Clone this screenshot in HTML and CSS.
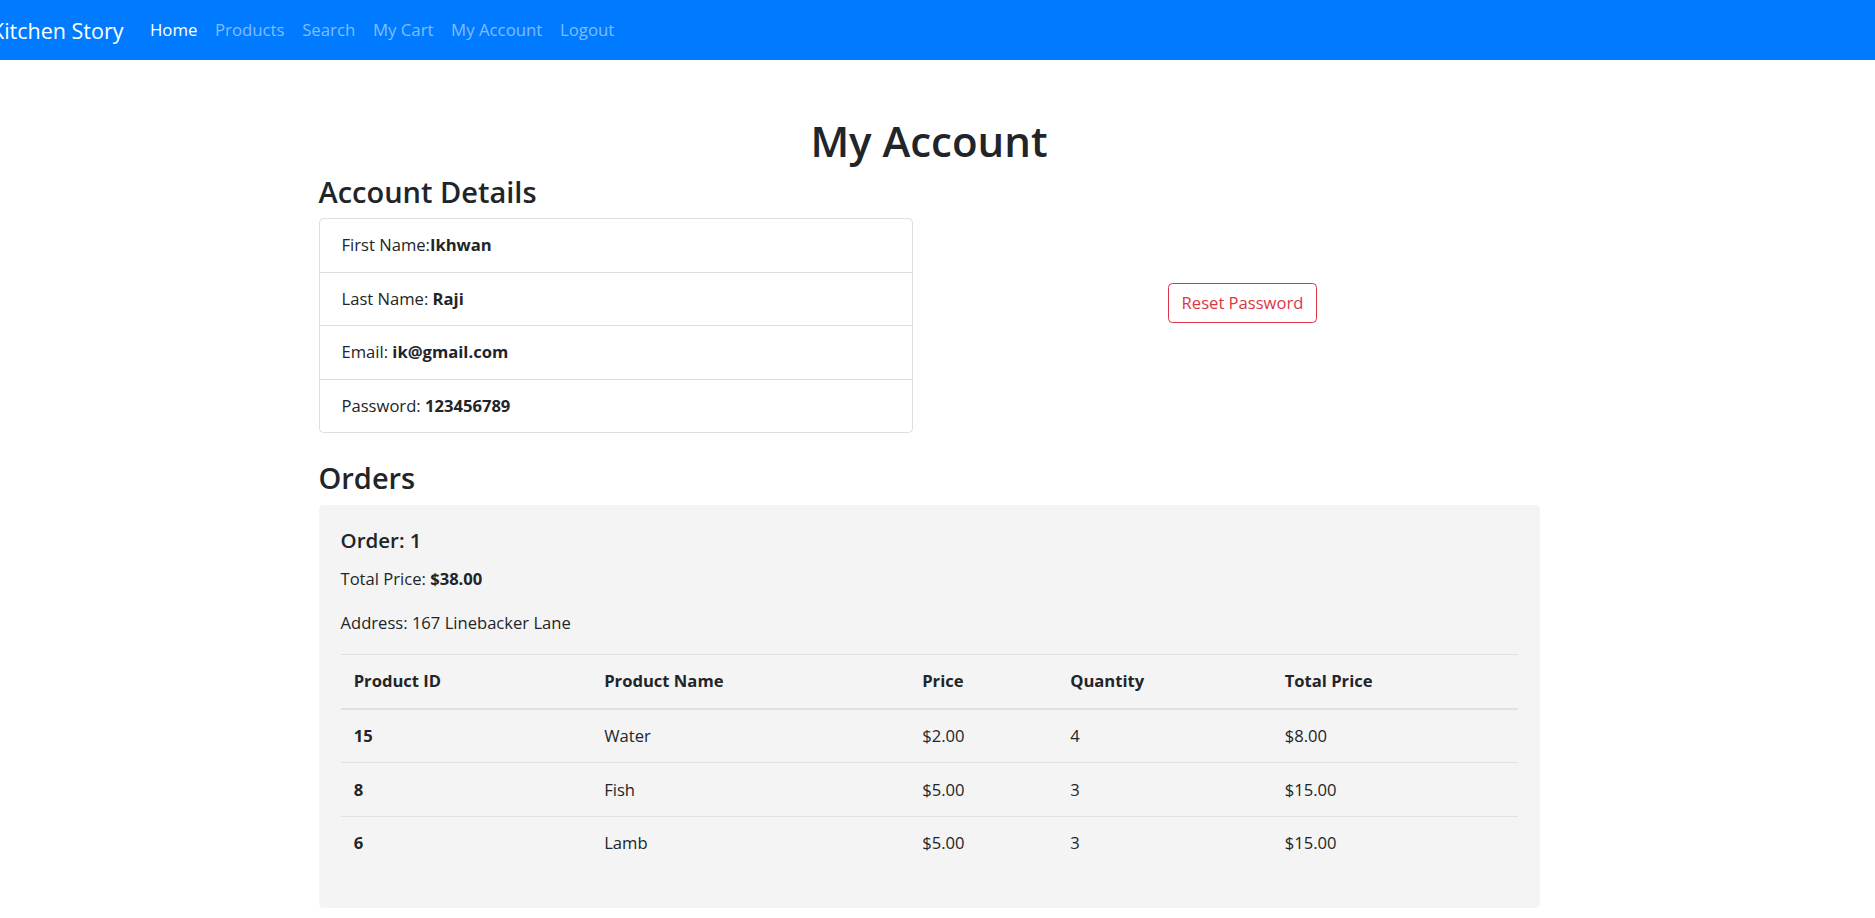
FILE: index.html
```html
<!DOCTYPE html>
<html lang="en">
<head>
<meta charset="utf-8">
<title>My Account - Kitchen Story</title>
<link rel="stylesheet" href="styles.css">
</head>
<body>
<nav class="navbar">
  <a class="brand" href="#">Kitchen Story</a>
  <ul class="nav">
    <li><a class="nav-link active" href="#">Home</a></li>
    <li><a class="nav-link" href="#">Products</a></li>
    <li><a class="nav-link" href="#">Search</a></li>
    <li><a class="nav-link" href="#">My Cart</a></li>
    <li><a class="nav-link" href="#">My Account</a></li>
    <li><a class="nav-link" href="#">Logout</a></li>
  </ul>
</nav>
<div class="page">
  <main class="container">
    <h1 class="title">My Account</h1>
    <div class="account-row">
      <div class="account-col">
        <h3 class="section-title">Account Details</h3>
        <ul class="list-group">
          <li class="list-item">First Name:<b>Ikhwan</b></li>
          <li class="list-item">Last Name: <b>Raji</b></li>
          <li class="list-item">Email: <b>ik@gmail.com</b></li>
          <li class="list-item">Password: <b>123456789</b></li>
        </ul>
      </div>
      <div class="action-col">
        <button class="btn-outline-danger" type="button">Reset Password</button>
      </div>
    </div>
    <h3 class="section-title orders-title">Orders</h3>
    <section class="order-box">
      <h5 class="order-title">Order: 1</h5>
      <p class="order-line">Total Price: <b>$38.00</b></p>
      <p class="order-line">Address: 167 Linebacker Lane</p>
      <table class="table">
        <colgroup>
          <col class="c-id"><col class="c-name"><col class="c-price"><col class="c-qty"><col class="c-total">
        </colgroup>
        <thead>
          <tr><th>Product ID</th><th>Product Name</th><th>Price</th><th>Quantity</th><th>Total Price</th></tr>
        </thead>
        <tbody>
          <tr><th>15</th><td>Water</td><td>$2.00</td><td>4</td><td>$8.00</td></tr>
          <tr><th>8</th><td>Fish</td><td>$5.00</td><td>3</td><td>$15.00</td></tr>
          <tr><th>6</th><td>Lamb</td><td>$5.00</td><td>3</td><td>$15.00</td></tr>
        </tbody>
      </table>
    </section>
  </main>
</div>
</body>
</html>
```
FILE: styles.css
```css
* { box-sizing: border-box; }

html, body {
  margin: 0;
  padding: 0;
  background: #fff;
}

body {
  font-family: "Open Sans", "Noto Sans", "Liberation Sans", sans-serif;
  font-size: 16.6px;
  line-height: 26.4px;
  color: #212529;
}

/* Navbar */
.navbar {
  display: flex;
  align-items: center;
  height: 60px;
  background: #007bff;
  padding: 0 17.6px 0 0;
  overflow: hidden;
}

.brand {
  margin-left: -9px;
  margin-right: 17.6px;
  font-size: 21.5px;
  line-height: 33px;
  color: #fff;
  text-decoration: none;
  white-space: nowrap;
}

.nav {
  display: flex;
  list-style: none;
  margin: 0;
  padding: 0;
}

.nav-link {
  display: block;
  padding: 8.8px 8.8px;
  font-size: 16.8px;
  color: #80bdff;
  text-decoration: none;
  white-space: nowrap;
}

.nav-link.active { color: #fff; }

/* Page */
.page { padding-right: 17px; }

.container {
  width: 1221px;
  margin: 0 auto;
}

.title {
  margin: 55px 0 4.8px;
  text-align: center;
  font-size: 42px;
  font-weight: 600;
  line-height: 52.8px;
}

.account-row {
  display: grid;
  grid-template-columns: 1fr 1fr;
  column-gap: 33px;
}

.account-col { min-width: 0; }

.section-title {
  margin: 0 0 8.8px;
  font-size: 29px;
  font-weight: 600;
  line-height: 37px;
}

.list-group {
  list-style: none;
  margin: 0;
  padding: 0;
  border: 1px solid rgba(0, 0, 0, 0.125);
  border-radius: 4.4px;
}

.list-item {
  padding: 13px 22px;
}

.list-item + .list-item {
  border-top: 1px solid rgba(0, 0, 0, 0.125);
}

.list-item b { font-weight: 700; }

.action-col {
  display: flex;
  align-items: center;
  justify-content: center;
}

.btn-outline-danger {
  font-family: inherit;
  font-size: 16.6px;
  line-height: 26px;
  padding: 6px 13px;
  color: #dc3545;
  background: transparent;
  border: 1px solid #dc3545;
  border-radius: 4.4px;
  cursor: pointer;
}

.orders-title { margin-top: 26px; }

/* Orders */
.order-box {
  background: #f4f4f4;
  border-radius: 4.4px;
  padding: 22px;
}

.order-title {
  margin: 0 0 12.7px;
  font-size: 20.5px;
  font-weight: 600;
  line-height: 26.4px;
}

.order-line {
  margin: 0 0 17.6px;
}

.table {
  width: 100%;
  border-collapse: collapse;
  table-layout: fixed;
  margin-bottom: 16px;
}

.c-id { width: 250.5px; }
.c-name { width: 318px; }
.c-price { width: 148px; }
.c-qty { width: 214.5px; }
.c-total { width: auto; }

.table th,
.table td {
  padding: 13.2px;
  text-align: left;
  vertical-align: top;
  border-top: 1px solid #dee2e6;
  line-height: 26.4px;
}

.table th { font-weight: 700; }
.table td { font-weight: 400; }

.table thead th {
  border-bottom: 2px solid #dee2e6;
}
```
